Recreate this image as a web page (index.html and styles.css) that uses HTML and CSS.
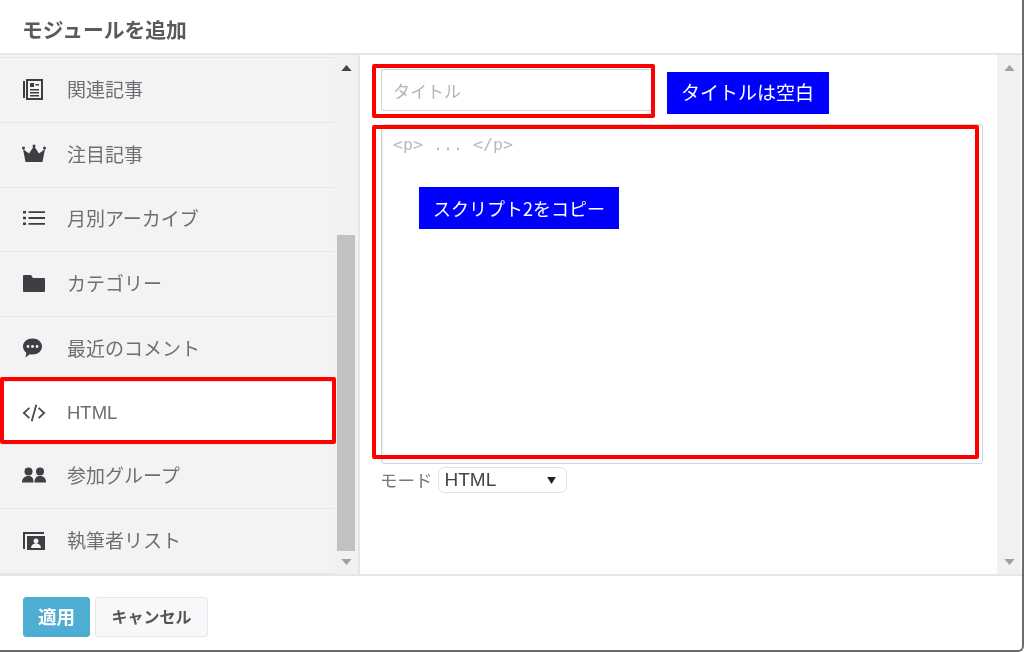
FILE: index.html
```html
<!DOCTYPE html>
<html lang="ja">
<head>
<meta charset="utf-8">
<title>モジュールを追加</title>
<link rel="stylesheet" href="styles.css">
</head>
<body>
<div class="modal">
  <header class="head">モジュールを追加</header>
  <div class="main">
    <aside class="side">
      <ul class="list">
        <li class="item"><svg class="ico" viewBox="0 0 24 24"><path d="M1 4h2v17h-2zM4 2h17v21H4zM6 4v17h13V4zM8 6h4v4H8zM13.500 7H17v1.500h-3.500zM8 12h9v1.500H8zM8 15h9v1.500H8zM8 18h9v1.500H8z" fill-rule="evenodd"/></svg><span>関連記事</span></li>
        <li class="item"><svg class="ico" viewBox="0 0 24 24"><path d="M1 7l6 4.500L12 4l5 7.500L23 7l-2.500 13h-17z"/><circle cx="1.500" cy="6" r="1.500"/><circle cx="12" cy="4" r="1.500"/><circle cx="22.500" cy="6" r="1.500"/></svg><span>注目記事</span></li>
        <li class="item"><svg class="ico" viewBox="0 0 24 24"><path d="M1 5h3v2.400H1zM1 10.800h3v2.400H1zM1 16.600h3V19H1zM6.500 5.300H23v1.800H6.500zM6.500 11.100H23v1.800H6.500zM6.500 16.900H23v1.800H6.500z"/></svg><span>月別アーカイブ</span></li>
        <li class="item"><svg class="ico" viewBox="0 0 24 24"><path d="M1 5q0-1 1-1h7l2 3h11q1 0 1 1v12q0 1-1 1H2q-1 0-1-1z"/></svg><span>カテゴリー</span></li>
        <li class="item"><svg class="ico" viewBox="0 0 24 24"><path d="M10.500 2.500c5.300 0 9.500 3.400 9.500 8s-4.200 8-9.500 8c-.9 0-1.800-.1-2.700-.3L3.500 21.500l.8-4.700C2.300 15.300 1 13 1 10.500c0-4.600 4.200-8 9.500-8z"/><circle class="dot" cx="6" cy="10.500" r="1.400"/><circle class="dot" cx="10.500" cy="10.500" r="1.400"/><circle class="dot" cx="15" cy="10.500" r="1.400"/></svg><span>最近のコメント</span></li>
        <li class="item active"><svg class="ico ico-code" viewBox="0 0 26 24"><path d="M8 6.500l-6 5.500 6 5.500M18 6.500l6 5.500-6 5.500M15.500 3l-5 18"/></svg><span>HTML</span></li>
        <li class="item"><svg class="ico" viewBox="0 0 24 24"><circle cx="6.500" cy="8.500" r="4"/><circle cx="18" cy="8.500" r="4"/><path d="M0 19.500c0-4 2.500-6.500 6.500-6.500s5 2.500 5 6.500zM12.500 19.500c0-4 1.500-6.500 5.500-6.500s6 2.500 6 6.500z"/></svg><span>参加グループ</span></li>
        <li class="item last"><svg class="ico" viewBox="0 0 24 24"><path d="M1 4h21v2H3v15H1zM5 8h18v14H5zM14 10.500a2.500 2.500 0 1 0 .01 0zM9 20h10c0-3-2-4.500-5-4.500S9 17 9 20z" fill-rule="evenodd"/></svg><span>執筆者リスト</span></li>
      </ul>
      <div class="bar bar-left">
        <svg class="arrow" viewBox="0 0 12 7"><path d="M6 0l6 7H0z"/></svg>
        <div class="thumb"></div>
        <svg class="arrow dim" viewBox="0 0 12 7"><path d="M0 0h12L6 7z"/></svg>
      </div>
    </aside>
    <section class="pane">
      <div class="form">
        <div class="title-field">タイトル</div>
        <div class="code">&lt;p&gt; ... &lt;/p&gt;</div>
        <div class="mode"><span>モード</span><div class="select">HTML<svg class="caret" viewBox="0 0 10 8"><path d="M0 0h10L5 8z"/></svg></div></div>
      </div>
      <div class="bar bar-right">
        <svg class="arrow dim" viewBox="0 0 12 7"><path d="M6 0l6 7H0z"/></svg>
        <svg class="arrow dim" viewBox="0 0 12 7"><path d="M0 0h12L6 7z"/></svg>
      </div>
    </section>
  </div>
  <footer class="foot">
    <button class="btn primary">適用</button>
    <button class="btn">キャンセル</button>
  </footer>
</div>
<div class="mark mark-item"></div>
<div class="mark mark-title"></div>
<div class="mark mark-code"></div>
<div class="note note-title">タイトルは空白</div>
<div class="note note-code">スクリプト2をコピー</div>
</body>
</html>
```
FILE: styles.css
```css
* { box-sizing: border-box; }
html, body { margin: 0; height: 652px; overflow: hidden; background: #fff; }
body { position: relative; font-family: "Noto Sans CJK JP", "Noto Sans", sans-serif; color: #55595c; filter: blur(0.35px); }
.modal { width: 1024px; height: 652px; display: flex; flex-direction: column; background: #fff; border-right: 2px solid #6b6b6b; border-bottom: 2px solid #6b6b6b; border-bottom-right-radius: 6px; }
.head { height: 55px; flex: none; padding: 15px 0 0 22px; font-size: 20.800px; line-height: 29px; font-weight: 700; color: #5a5a5a; border-bottom: 2px solid #e6e6e6; }
.main { flex: 1; display: flex; min-height: 0; border-bottom: 2px solid #e6e6e6; }
.side { width: 360px; flex: none; display: flex; background: #f3f3f3; border-right: 2px solid #e6e6e6; }
.list { list-style: none; margin: 2px 0 0; padding: 0; width: 334px; display: flex; flex-direction: column; }
.item { flex: 1; display: flex; align-items: center; gap: 21px; padding: 0 0 2px 22px; font-size: 19px; line-height: 28px; color: #6c6f73; border-top: 1px solid #e6e6e6; }
.item.active { background: #fff; padding-bottom: 0; font-family: "Liberation Sans", sans-serif; font-size: 18.500px; }
.item.last { border-bottom: 1px solid #e6e6e6; }
.ico { width: 24px; height: 24px; flex: none; fill: #3d3f45; }
.ico-code { fill: none; stroke: #4a4c52; stroke-width: 2; }
.dot { fill: #f3f3f3; }
.bar { width: 24px; flex: none; display: flex; flex-direction: column; align-items: center; justify-content: space-between; background: #f1f1f1; }
.bar-left { padding: 10px 0 9px; }
.bar-right { padding: 10px 0 9px; margin-right: 1px; }
.arrow { width: 11px; height: 6px; fill: #444; }
.arrow.dim { fill: #a0a0a0; }
.thumb { width: 18px; height: 316px; margin-top: 155px; background: #c1c1c1; }
.pane { flex: 1; min-width: 0; display: flex; }
.form { flex: 1; min-width: 0; padding: 14px 14px 0 21px; }
.title-field { width: 273px; height: 42px; padding: 7px 11px; border: 1px solid #cfd6db; border-right: 0; border-radius: 3px 0 0 3px; font-size: 17px; line-height: 28px; color: #b5b5b5; }
.code { margin-top: 13px; height: 340px; padding: 7px 11px; border: 1px solid #cfd6db; border-radius: 3px; box-shadow: inset 1px 1px 1px #e6eaed; font-family: "DejaVu Sans Mono", monospace; font-size: 16.600px; line-height: 26px; color: #b9b9b9; }
.mode { margin-top: 3px; margin-left: -1px; display: flex; align-items: center; gap: 5px; font-size: 17.500px; line-height: 26px; color: #777; }
.select { width: 129px; height: 26px; display: flex; align-items: center; justify-content: space-between; padding: 0 10px 0 6px; border: 1px solid #dde3e8; border-radius: 6px; font-family: "Liberation Sans", sans-serif; font-size: 19px; color: #444; }
.caret { width: 9px; height: 7px; fill: #222; }
.foot { height: 74px; flex: none; display: flex; gap: 5px; padding: 21px 0 0 23px; }
.btn { height: 40px; padding: 0 0 3px; width: 113px; background: #f7f8f9; border: 1px solid #e3e7ea; border-radius: 3px; font-family: "Noto Sans CJK JP", sans-serif; font-size: 16px; font-weight: 700; color: #555; }
.btn.primary { width: 67px; font-size: 18.500px; background: #4dadd3; border-color: #4dadd3; color: #fff; }
.mark { position: absolute; border: 4px solid #f00; border-radius: 2px; }
.mark-item { left: 0; top: 377px; width: 336px; height: 67px; }
.mark-title { left: 372px; top: 64px; width: 283px; height: 54px; }
.mark-code { left: 372px; top: 125px; width: 607px; height: 334px; }
.note { position: absolute; height: 42px; padding: 0 14px; background: #00f; color: #fff; font-size: 18px; line-height: 42px; white-space: nowrap; }
.note-title { left: 667px; top: 72px; width: 162px; font-size: 19px; line-height: 40px; }
.note-code { left: 419px; top: 187px; width: 200px; }
```
